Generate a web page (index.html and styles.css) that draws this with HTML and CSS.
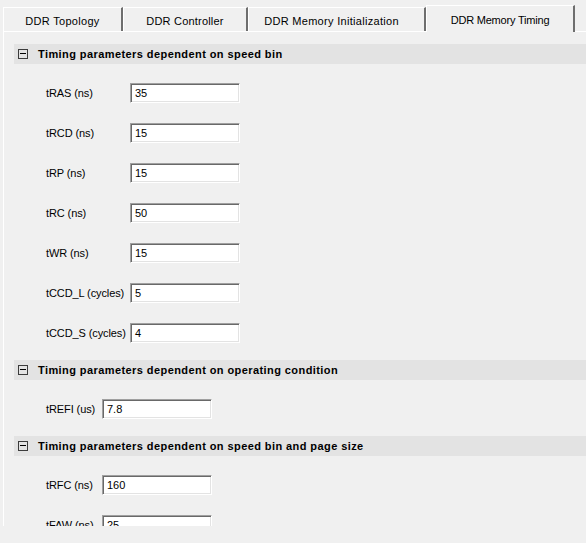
FILE: index.html
```html
<!DOCTYPE html>
<html>
<head>
<meta charset="utf-8">
<link rel="stylesheet" href="styles.css">
</head>
<body>
<div class="tabs">
  <div class="tab t1">DDR Topology</div>
  <div class="tab t2">DDR Controller</div>
  <div class="tab t3">DDR Memory Initialization</div>
  <div class="tab t4 active">DDR Memory Timing</div>
</div>
<div class="panel">
  <div class="section">
    <div class="band"><span class="toggle"></span><span class="title">Timing parameters dependent on speed bin</span></div>
    <div class="rows wide">
      <div class="row"><span class="label">tRAS (ns)</span><div class="field">35</div></div>
      <div class="row"><span class="label">tRCD (ns)</span><div class="field">15</div></div>
      <div class="row"><span class="label">tRP (ns)</span><div class="field">15</div></div>
      <div class="row"><span class="label">tRC (ns)</span><div class="field">50</div></div>
      <div class="row"><span class="label">tWR (ns)</span><div class="field">15</div></div>
      <div class="row"><span class="label">tCCD_L (cycles)</span><div class="field">5</div></div>
      <div class="row"><span class="label">tCCD_S (cycles)</span><div class="field">4</div></div>
    </div>
  </div>
  <div class="section">
    <div class="band"><span class="toggle"></span><span class="title">Timing parameters dependent on operating condition</span></div>
    <div class="rows narrow">
      <div class="row"><span class="label">tREFI (us)</span><div class="field">7.8</div></div>
    </div>
  </div>
  <div class="section">
    <div class="band"><span class="toggle"></span><span class="title">Timing parameters dependent on speed bin and page size</span></div>
    <div class="rows narrow">
      <div class="row"><span class="label">tRFC (ns)</span><div class="field">160</div></div>
      <div class="row"><span class="label">tFAW (ns)</span><div class="field">25</div></div>
    </div>
  </div>
</div>
</body>
</html>
```

FILE: styles.css
```css
html, body {
  margin: 0;
  padding: 0;
  background: #f0f0f0;
  width: 586px;
  height: 543px;
  overflow: hidden;
}
body {
  font-family: "Liberation Sans", Arial, sans-serif;
  font-size: 11px;
  color: #000;
}
.tabs {
  display: flex;
  align-items: flex-end;
  padding-left: 3px;
  height: 31px;
  position: relative;
  z-index: 2;
}
.tab {
  box-sizing: border-box;
  height: 24px;
  border-top: 1px solid #ffffff;
  border-left: 1px solid #ffffff;
  border-right: 2px solid #6e6e6e;
  display: flex;
  align-items: center;
  justify-content: center;
  padding-top: 3px;
  white-space: nowrap;
}
.t1 { width: 120px; letter-spacing: 0.3px; }
.t2 { width: 125px; letter-spacing: 0.2px; }
.t3 { width: 178px; letter-spacing: 0.3px; padding-right: 10px; }
.t4 {
  width: 149px;
  height: 27px;
  padding-top: 2px;
  margin-bottom: -1px;
  background: #f0f0f0;
  border-right: 2px solid #6e6e6e;
  letter-spacing: -0.2px;
}
.panel {
  margin-left: 3px;
  border-top: 1px solid #ffffff;
  border-left: 1px solid #ffffff;
  height: 495px;
  overflow: hidden;
  padding: 12px 0 0 10px;
  box-sizing: border-box;
}
.band {
  height: 20px;
  background: #e3e3e3;
  display: flex;
  align-items: center;
}
.toggle {
  box-sizing: border-box;
  width: 10px;
  height: 10px;
  border: 1px solid #3c3c3c;
  margin-left: 4px;
  margin-right: 10px;
  position: relative;
}
.toggle::after {
  content: "";
  position: absolute;
  left: 1px;
  right: 1px;
  top: 3px;
  height: 1px;
  background: #000;
}
.title {
  font-weight: bold;
  letter-spacing: 0.42px;
}
.rows {
  display: flex;
  flex-direction: column;
  gap: 20px;
  padding: 19px 0 17px 32px;
}
.row {
  display: flex;
  align-items: center;
  height: 20px;
}
.label {
  flex: none;
  letter-spacing: -0.1px;
}
.wide .label { width: 84px; }
.narrow .label { width: 56px; }
.field {
  box-sizing: border-box;
  width: 110px;
  height: 20px;
  background: #ffffff;
  border-top: 1px solid #a0a0a0;
  border-left: 1px solid #a0a0a0;
  border-right: 1px solid #ffffff;
  border-bottom: 1px solid #ffffff;
  box-shadow: inset 1px 1px 0 #696969, inset -1px -1px 0 #e3e3e3;
  padding: 3px 0 0 4px;
  line-height: 13px;
}
```
